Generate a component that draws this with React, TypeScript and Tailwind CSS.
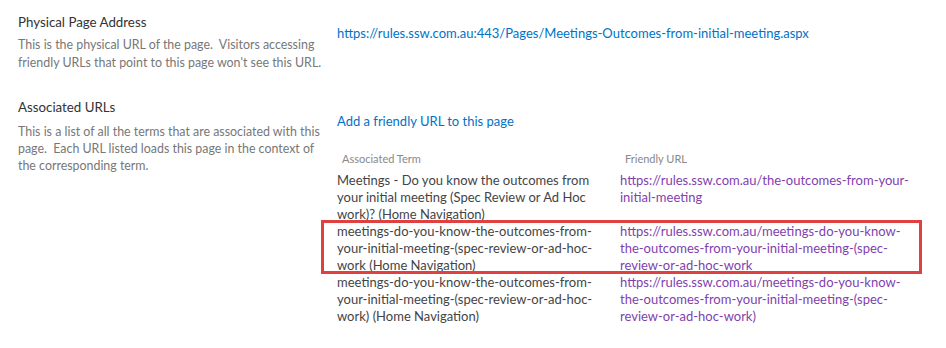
const FONT = "font-['Lato','Open_Sans',sans-serif]";

interface TermRow {
  term: string;
  url: string;
  highlight?: boolean;
}

const ROWS: TermRow[] = [
  {
    term: "Meetings - Do you know the outcomes from your initial meeting (Spec Review or Ad Hoc work)? (Home Navigation)",
    url: "https://rules.ssw.com.au/the-outcomes-from-your-initial-meeting",
  },
  {
    term: "meetings-do-you-know-the-outcomes-from-your-initial-meeting-(spec-review-or-ad-hoc-work (Home Navigation)",
    url: "https://rules.ssw.com.au/meetings-do-you-know-the-outcomes-from-your-initial-meeting-(spec-review-or-ad-hoc-work",
    highlight: true,
  },
  {
    term: "meetings-do-you-know-the-outcomes-from-your-initial-meeting-(spec-review-or-ad-hoc-work) (Home Navigation)",
    url: "https://rules.ssw.com.au/meetings-do-you-know-the-outcomes-from-your-initial-meeting-(spec-review-or-ad-hoc-work)",
  },
];

export default function App() {
  return (
    <div className={`w-[946px] h-[348px] bg-white overflow-hidden ${FONT}`}>
      {/* Physical address */}
      <div className="flex">
        <div className="w-[337px] pl-[18px] pr-[4px] pt-[12px] shrink-0">
          <div className="text-[13.3px] leading-5 text-[#333]">Physical Page Address</div>
          <p className="text-[12.4px] leading-[18px] text-[#777] mt-[4px]">
            This is the physical URL of the page.&nbsp; Visitors accessing friendly URLs that point to this page won't see this URL.
          </p>
        </div>
        <div className="pt-[20px]">
          <a className="text-[13px] leading-5 text-[#0072c6]">
            https://rules.ssw.com.au:443/Pages/Meetings-Outcomes-from-initial-meeting.aspx
          </a>
        </div>
      </div>

      {/* Associated URLs */}
      <div className="flex mt-[25px]">
        <div className="w-[337px] pl-[18px] pr-[4px] shrink-0">
          <div className="text-[13.3px] leading-5 text-[#333]">Associated URLs</div>
          <p className="text-[12.4px] leading-[17px] text-[#777] mt-[6px]">
            This is a list of all the terms that are associated with this page.&nbsp; Each URL listed loads this page in the context of the corresponding term.
          </p>
        </div>
        <div className="pt-[11px]">
          <a className="text-[13px] leading-5 text-[#0072c6]">Add a friendly URL to this page</a>
          <div className="relative mt-[19px] w-[590px]">
            <div className="flex text-[11px] leading-4 text-[#888]">
              <div className="w-[283px] pl-[5px]">Associated Term</div>
              <div className="pl-[5px]">Friendly URL</div>
            </div>
            <div className="mt-[5px]">
              {ROWS.map((r, i) => (
                <div key={i} className="relative flex text-[13px] leading-[17px]">
                  <div className="w-[283px] pr-[16px] text-[#444]">{r.term}</div>
                  <div className="w-[300px] text-[#7f3fae] break-words">{r.url}</div>
                  {r.highlight && (
                    <div className="absolute left-[-16px] top-[-3px] w-[601px] h-[54px] border-[3px] border-[#e0403f] pointer-events-none" />
                  )}
                </div>
              ))}
            </div>
          </div>
        </div>
      </div>
    </div>
  );
}
